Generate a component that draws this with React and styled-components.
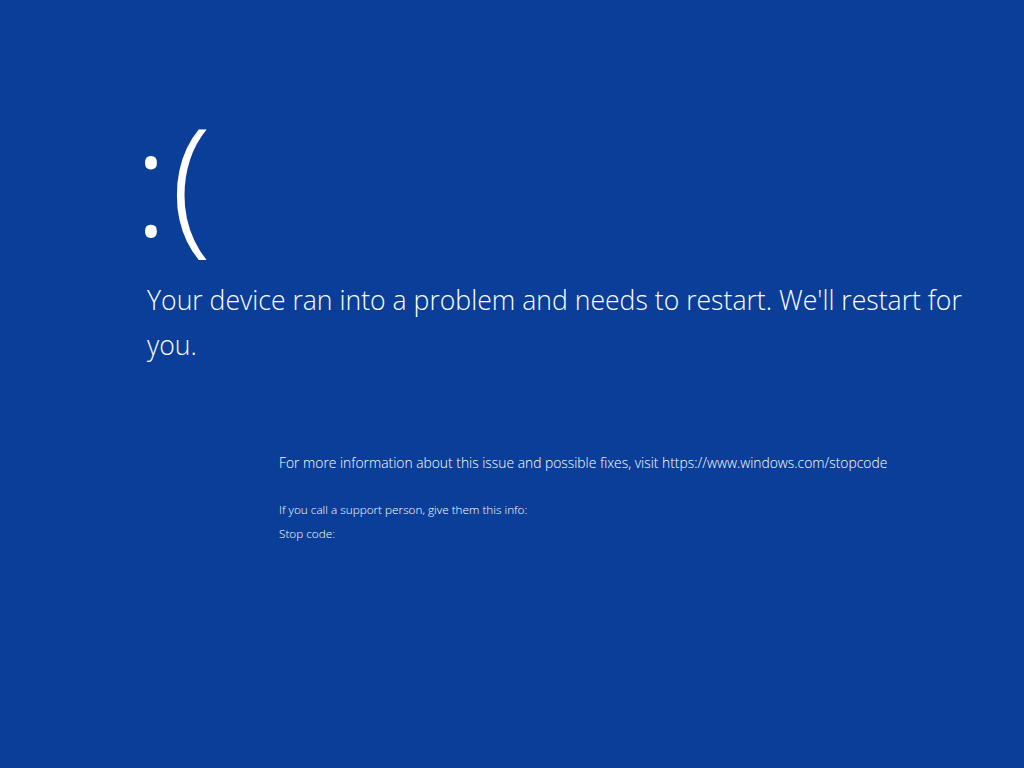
import React from 'react';
import styled, { createGlobalStyle } from 'styled-components';

// ================= style ======================= //
const GlobalStyle = createGlobalStyle`
    html, body {
        margin: 0;
        padding: 0;
        background: #0a3e98;
    }
    body {
        font-family: "Open Sans", "Noto Sans", "Liberation Sans", sans-serif;
        color: #ffffff;
    }
`;

const Screen = styled.div`
    width: 1024px;
    height: 768px;
    background: #0a3e98;
    overflow: hidden;
    display: flex;
    flex-direction: column;
    padding-left: 140px;
    box-sizing: border-box;
`;

const Face = styled.div`
    margin-top: 78px;
    margin-left: -7px;
    font-size: 150px;
    font-weight: 300;
    line-height: 200px;
    height: 200px;
    letter-spacing: 2px;
`;

const Headline = styled.div`
    margin-left: 7px;
    width: 840px;
    font-size: 26.6px;
    font-weight: 300;
    line-height: 45px;
`;

const Details = styled.div`
    margin-left: 139px;
    margin-top: 83px;
    display: flex;
    flex-direction: column;
`;

const Info = styled.div`
    font-size: ${(props) => props.size || 13}px;
    font-weight: 300;
    line-height: ${(props) => props.lh || 24}px;
    margin-bottom: ${(props) => props.gap || 0}px;
`;

// ================= component ======================= //
export default function App() {
    return (
        <>
            <GlobalStyle />
            <Screen>
                <Face>:(</Face>
                <Headline>
                    Your device ran into a problem and needs to restart. We'll restart for you.
                </Headline>
                <Details>
                    <Info size={13.85} gap={22}>
                        For more information about this issue and possible fixes, visit https://www.windows.com/stopcode
                    </Info>
                    <Info size={11.75}>If you call a support person, give them this info:</Info>
                    <Info size={11.75}>Stop code:</Info>
                </Details>
            </Screen>
        </>
    );
}
